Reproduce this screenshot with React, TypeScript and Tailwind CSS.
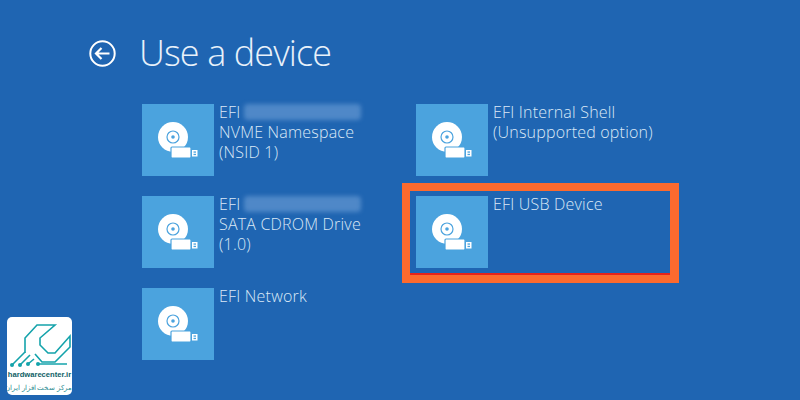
type Device = {
  lines: string[];
  blurred?: boolean;
};

function DiscIcon() {
  return (
    <svg width="72" height="72" viewBox="0 0 72 72" aria-hidden="true">
      <circle cx="31" cy="33" r="15" fill="#fff" />
      <circle cx="31" cy="33" r="6" fill="none" stroke="#4ba3de" strokeWidth="1.2" />
      <circle cx="31" cy="33" r="1.8" fill="#4ba3de" />
      <rect x="29" y="43" width="20" height="11" rx="1" fill="#fff" stroke="#4ba3de" strokeWidth="1.2" />
      <rect x="50" y="46" width="5.5" height="6.5" fill="#fff" />
      <rect x="51.5" y="47.4" width="2.5" height="1.3" fill="#4ba3de" />
      <rect x="51.5" y="49.8" width="2.5" height="1.3" fill="#4ba3de" />
    </svg>
  );
}

function DeviceTile({ lines, blurred }: Device) {
  return (
    <div className="flex h-[72px] gap-[5px]">
      <div className="size-[72px] shrink-0 bg-[#4ba3de]">
        <DiscIcon />
      </div>
      <div className="-mt-[2px] text-[16px] leading-[20px] font-light tracking-[0.2px] text-[#dbe9f7]">
        {lines.map((line, index) => (
          <div key={line} className="flex items-center whitespace-nowrap">
            {line}
            {blurred && index === 0 && (
              <span className="ml-[3px] h-[16px] w-[117px] rounded-sm bg-[#4f88c8] blur-[2px]" />
            )}
          </div>
        ))}
      </div>
    </div>
  );
}

function HardwareLogo() {
  return (
    <div className="absolute bottom-[5px] left-[7px] h-[78px] w-[65px] overflow-hidden rounded-[5px] bg-white">
      <svg width="65" height="52" viewBox="0 0 65 52" fill="none" stroke="#14a3ab" strokeWidth="1.6" aria-hidden="true">
        <path d="M18 36 L18 21 L30 8 H48 L33 21 V28 L41 36 H48 L63 19 V30 L48 45 H35 L28 37" />
        <path d="M5 48 L18 35" />
        <path d="M13 48 L23 38" />
        <path d="M21 47 L27 42" />
        <path d="M31 47 H60" />
        <circle cx="5" cy="48" r="2" fill="#14a3ab" stroke="none" />
        <circle cx="13" cy="48" r="2" fill="#14a3ab" stroke="none" />
        <circle cx="21" cy="47" r="2" fill="#14a3ab" stroke="none" />
        <circle cx="31" cy="47" r="2" fill="#14a3ab" stroke="none" />
      </svg>
      <div className="mt-[1px] text-center font-['Liberation_Sans',sans-serif] text-[7.6px] leading-[10px] font-bold whitespace-nowrap text-[#0f5f66]">
        hardwarecenter.ir
      </div>
      <div dir="rtl" className="mt-[3px] text-center font-['Noto_Sans',sans-serif] text-[6.5px] leading-[10px] whitespace-nowrap text-[#2c8c92]">
        مرکز سخت افزار ایران
      </div>
    </div>
  );
}

export default function App() {
  return (
    <div className="relative h-[400px] w-[800px] overflow-hidden bg-[#1f65b2] font-['Open_Sans','Noto_Sans',sans-serif]">
      <header className="flex items-center pt-[27px] pl-[89px]">
        <svg width="27" height="27" viewBox="0 0 27 27" fill="none" stroke="#fff" aria-hidden="true">
          <circle cx="13.5" cy="13.5" r="12.2" strokeWidth="2" />
          <path d="M20.5 13.5 H7.5 M12.5 8 L7 13.5 L12.5 19" strokeWidth="2.2" />
        </svg>
        <h1 className="ml-[23px] text-[36px] leading-[52px] font-light tracking-[-0.9px] text-[#e8f1fa]">
          Use a device
        </h1>
      </header>
      <div className="mt-[25px] ml-[142px] flex gap-[60px]">
        <div className="flex w-[214px] flex-col gap-5">
          <DeviceTile lines={["EFI", "NVME Namespace", "(NSID 1)"]} blurred />
          <DeviceTile lines={["EFI", "SATA CDROM Drive", "(1.0)"]} blurred />
          <DeviceTile lines={["EFI Network"]} />
        </div>
        <div className="flex flex-col gap-5">
          <DeviceTile lines={["EFI Internal Shell", "(Unsupported option)"]} />
          <div className="relative">
            <DeviceTile lines={["EFI USB Device"]} />
            <div className="absolute -top-[13px] -left-[14px] h-[100px] w-[277px] border-[8px] border-r-[9px] border-[#fc6a2e]">
              <div className="h-full w-full border-b-2 border-[#e5231b]" />
            </div>
          </div>
        </div>
      </div>
      <HardwareLogo />
    </div>
  );
}
